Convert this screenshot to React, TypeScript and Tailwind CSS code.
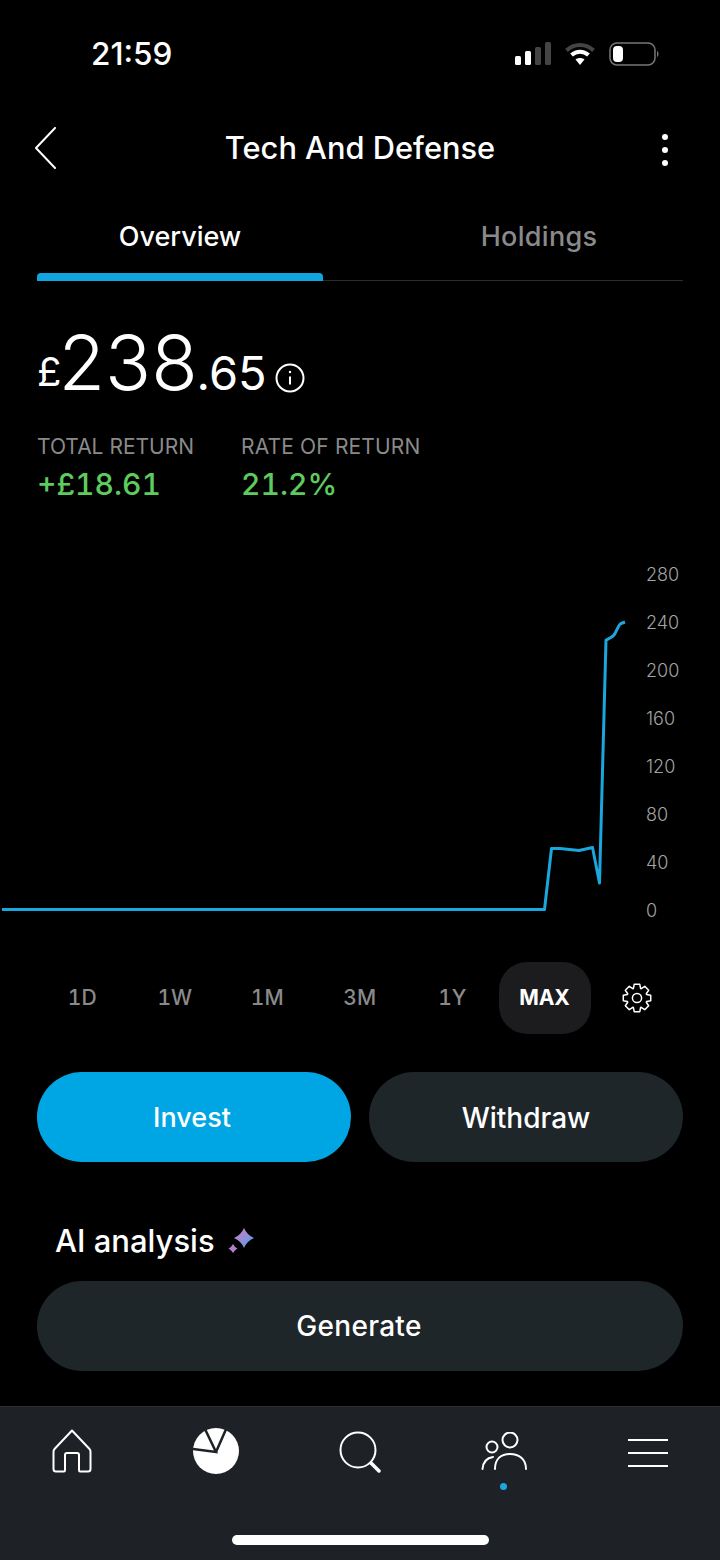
import React from 'react';

const sans = "font-['Inter','Liberation_Sans',sans-serif]";

const axisLabels = ['280', '240', '200', '160', '120', '80', '40', '0'];
const ranges = ['1D', '1W', '1M', '3M', '1Y'];

// 8 tooth cog outline
const gearPath = () => {
  const pts: string[] = [];
  for (let i = 0; i < 8; i++) {
    const a = (i * Math.PI) / 4 - Math.PI / 2;
    const step = [[-0.36, 10.2], [-0.2, 14], [0.2, 14], [0.36, 10.2]];
    step.forEach(([da, r]) => {
      pts.push(`${(15 + r * Math.cos(a + da)).toFixed(2)} ${(15 + r * Math.sin(a + da)).toFixed(2)}`);
    });
  }
  return 'M' + pts.join(' L') + ' Z';
};

const BackIcon = () => (
  <svg width="24" height="42" viewBox="0 0 24 42" fill="none" stroke="#fff" strokeWidth="2" strokeLinecap="round" strokeLinejoin="round">
    <path d="M21 1 L2 21 L21 41" />
  </svg>
);

const StatusIcons = () => (
  <div className="flex items-center gap-[14px]">
    <svg width="36" height="24" viewBox="0 0 36 24">
      <rect x="0" y="14" width="6" height="9" rx="1.5" fill="#fff" />
      <rect x="10" y="9" width="6" height="14" rx="1.5" fill="#fff" />
      <rect x="20" y="5" width="6" height="18" rx="1.5" fill="#444" />
      <rect x="30" y="0" width="6" height="23" rx="1.5" fill="#444" />
    </svg>
    <svg width="30" height="24" viewBox="0 0 30 24" fill="none">
      <path d="M1.5 8.5 C9 1 21 1 28.5 8.5" stroke="#444" strokeWidth="4" />
      <path d="M6.5 13 C11.5 8.5 18.5 8.5 23.5 13" stroke="#fff" strokeWidth="4" />
      <path d="M15 23 L10.5 17.5 C13 15.5 17 15.5 19.5 17.5 Z" fill="#fff" />
    </svg>
    <svg width="50" height="24" viewBox="0 0 50 24" fill="none">
      <rect x="1" y="1" width="45" height="22" rx="7" stroke="#777" strokeWidth="1.5" />
      <rect x="4" y="4" width="10" height="16" rx="4" fill="#fff" />
      <path d="M48 9 C50 10 50 14 48 15 Z" fill="#777" />
    </svg>
  </div>
);

const InfoIcon = () => (
  <svg width="30" height="30" viewBox="0 0 30 30" fill="none" stroke="#fff">
    <circle cx="15" cy="15" r="13.5" strokeWidth="2" />
    <path d="M15 13.5 V21.5" strokeWidth="2" />
    <circle cx="15" cy="9" r="1.2" fill="#fff" stroke="none" />
  </svg>
);

const GearIcon = () => (
  <svg width="30" height="30" viewBox="0 0 30 30" fill="none" stroke="#fff" strokeWidth="1.5" strokeLinejoin="round">
    <path d={gearPath()} />
    <circle cx="15" cy="15" r="4.6" />
  </svg>
);

const Sparkle = () => (
  <svg width="26" height="26" viewBox="0 0 26 26">
    <defs>
      <linearGradient id="spark" x1="0" y1="0" x2="1" y2="1">
        <stop offset="0.15" stopColor="#c77fc4" />
        <stop offset="0.85" stopColor="#5f9be8" />
      </linearGradient>
    </defs>
    <path d="M16 0 Q19 7 26 10 Q19 13 16 20 Q13 13 6 10 Q13 7 16 0 Z" fill="url(#spark)" />
    <path d="M5 16 Q6.500 19 9.500 20.500 Q6.500 22 5 25 Q3.500 22 0.500 20.500 Q3.500 19 5 16 Z" fill="#b57fc9" />
  </svg>
);

const HomeIcon = () => (
  <svg width="40" height="44" viewBox="0 0 40 44" fill="none" stroke="#fff" strokeWidth="2" strokeLinejoin="round">
    <path d="M20 1.500 L37.500 20 Q38.500 21 38.500 23 V40 Q38.500 42.500 36 42.500 H28 Q27 42.500 27 41 V26 Q27 24 25 24 H15 Q13 24 13 26 V41 Q13 42.500 12 42.500 H4 Q1.500 42.500 1.500 40 V23 Q1.500 21 2.500 20 Z" />
  </svg>
);

const PieIcon = () => (
  <svg width="46" height="46" viewBox="0 0 46 46">
    <circle cx="23" cy="23" r="23" fill="#fff" />
    <path d="M0 21 L23 24 L11 -1 M23 24 L34 -1" stroke="#1e2226" strokeWidth="2.500" fill="none" />
  </svg>
);

const SearchIcon = () => (
  <svg width="42" height="42" viewBox="0 0 42 42" fill="none" stroke="#fff" strokeLinecap="round">
    <circle cx="19" cy="19" r="17.500" strokeWidth="2" />
    <path d="M32 32 L40 40" strokeWidth="3.500" />
  </svg>
);

const PeopleIcon = () => (
  <svg width="46" height="38" viewBox="0 0 46 38" fill="none" stroke="#fff" strokeWidth="2" strokeLinecap="round">
    <circle cx="29" cy="8" r="7.500" />
    <circle cx="11" cy="15" r="5.500" />
    <path d="M14 37 C14 27 20 22 29 22 C38 22 45 27 45 37" />
    <path d="M1.500 37 C2 31 5 26 12 25" />
  </svg>
);

const MenuIcon = () => (
  <div className="mt-[3px] flex w-10 flex-col gap-[11px]">
    <div className="h-[2px] bg-white" />
    <div className="h-[2px] bg-white" />
    <div className="h-[2px] bg-white" />
  </div>
);

const Chart = () => (
  <div className="relative h-[372px] w-full">
    <svg className="absolute left-0 top-0" width="720" height="372" viewBox="0 0 720 372" fill="none">
      <path
        d="M2 350.500 H544.500 L551.500 289.500 L560 289.500 L579 291.500 L592.500 288.500 L599.500 324 L606 81 C610 79 612 78.500 614 76 C617 72 618 66 621 64.500 L625 63"
        stroke="#19a7de"
        strokeWidth="3"
        strokeLinejoin="round"
      />
    </svg>
    <div className="absolute left-[646px] top-[4px] flex flex-col gap-[24px] text-[18px] font-light leading-[24px] text-[#a3a3a3]">
      {axisLabels.map(l => <span key={l}>{l}</span>)}
    </div>
  </div>
);

export default function App() {
  return (
    <div className={`${sans} relative flex h-[1560px] w-[720px] flex-col overflow-hidden bg-black text-white`}>
      {/* status bar */}
      <div className="flex items-center justify-between pl-[91px] pr-[61px] pt-[36px]">
        <span className="text-[31.5px] font-medium leading-[36px]">21:59</span>
        <StatusIcons />
      </div>

      {/* header */}
      <div className="relative mt-[55px] flex h-[42px] items-center justify-center">
        <div className="absolute left-[34px] top-0"><BackIcon /></div>
        <span className="text-[30.8px] font-medium leading-[42px]">Tech And Defense</span>
        <div className="absolute right-[52px] top-[7px] flex flex-col gap-[7px]">
          <div className="h-[6px] w-[6px] rounded-full bg-white" />
          <div className="h-[6px] w-[6px] rounded-full bg-white" />
          <div className="h-[6px] w-[6px] rounded-full bg-white" />
        </div>
      </div>

      {/* tabs */}
      <div className="mx-[37px] mt-[51px] flex h-[61px] border-b border-[#2a2d30]">
        <div className="relative w-[286px] text-center text-[27px] font-medium leading-[34px]">
          Overview
          <div className="absolute bottom-[-1px] left-0 right-0 h-[8px] rounded-t-[4px] bg-[#0ea5e0]" />
        </div>
        <div className="flex-1 pl-[72px] text-center text-[27px] font-medium leading-[34px] tracking-[0.3px] text-[#8a8a8a]">Holdings</div>
      </div>

      {/* value */}
      <div className="ml-[37px] mt-[42px] flex items-end">
        <span className="mb-[9px] text-[40px] leading-[40px]">£</span>
        <span className="-ml-[3px] text-[76px] font-light leading-[78px]">238</span>
        <span className="-ml-[1px] mb-[5px] text-[47px] leading-[47px]">.65</span>
        <span className="mb-[8px] ml-[8px]"><InfoIcon /></span>
      </div>

      {/* returns */}
      <div className="ml-[37px] mt-[32px] flex gap-[47px]">
        <div className="flex flex-col">
          <span className="text-[21px] leading-[28px] text-[#8a8a8a]">TOTAL RETURN</span>
          <span className="mt-[7px] text-[30px] font-medium leading-[32px] tabular-nums text-[#5ecb5e]">+£18.61</span>
        </div>
        <div className="flex flex-col">
          <span className="text-[21px] leading-[28px] tracking-[0.15px] text-[#8a8a8a]">RATE OF RETURN</span>
          <span className="mt-[7px] text-[30px] font-medium leading-[32px] tabular-nums text-[#5ecb5e]">21.2%</span>
        </div>
      </div>

      <div className="mt-[59px]"><Chart /></div>

      {/* time ranges */}
      <div className="mt-[31px] flex h-[72px] items-center pl-[36px]">
        {ranges.map(r => (
          <div key={r} className="flex w-[92.500px] justify-center text-[21px] font-medium tabular-nums text-[#8a8a8a]">{r}</div>
        ))}
        <div className="flex h-[72px] w-[92px] items-center justify-center rounded-[28px] bg-[#1c1c1e] text-[21px] font-bold">MAX</div>
        <div className="ml-[31px]"><GearIcon /></div>
      </div>

      {/* buttons */}
      <div className="mx-[37px] mt-[38px] flex gap-[18px]">
        <div className="flex h-[90px] flex-1 items-center justify-center rounded-[45px] bg-[#00a6e3] pt-[2px] text-[27px] font-medium"><span className="mr-[4px]">Invest</span></div>
        <div className="flex h-[90px] flex-1 items-center justify-center rounded-[45px] bg-[#1f262a] pt-[2px] text-[28px] font-medium">Withdraw</div>
      </div>

      {/* ai */}
      <div className="ml-[55px] mt-[60px] flex h-[38px] items-center gap-[13px]">
        <span className="text-[31px] font-medium leading-[38px]">AI analysis</span>
        <Sparkle />
      </div>
      <div className="mx-[37px] mt-[21px] flex h-[90px] items-center justify-center rounded-[45px] bg-[#1f262a] text-[28px] font-medium tracking-[0.3px]"><span className="mr-[2px]">Generate</span></div>

      {/* bottom nav */}
      <div className="relative mt-[35px] flex flex-1 items-start border-t border-[#2a2e32] bg-[#1e2226]">
        <div className="mt-[21px] grid h-[46px] w-full grid-cols-5 items-center justify-items-center">
          <HomeIcon />
          <PieIcon />
          <div className="mt-[2px]"><SearchIcon /></div>
          <PeopleIcon />
          <MenuIcon />
        </div>
        <div className="absolute left-[500px] top-[76px] h-[7px] w-[7px] rounded-full bg-[#19a7de]" />
        <div className="absolute bottom-[15px] left-[232px] h-[10px] w-[257px] rounded-full bg-white" />
      </div>
    </div>
  );
}
